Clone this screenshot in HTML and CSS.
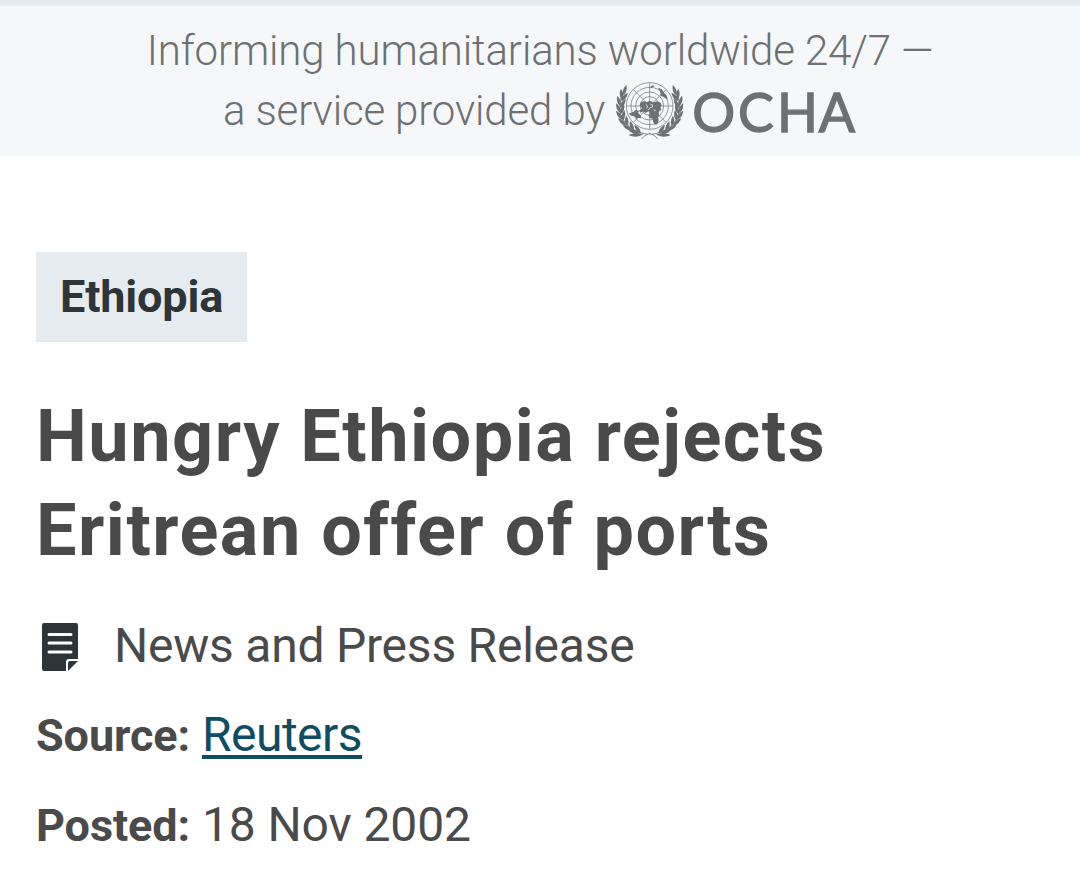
FILE: index.html
```
<!DOCTYPE html>
<html lang="en">
<head>
    <meta charset="UTF-8">
    <meta name="viewport" content="width=device-width, initial-scale=1.0">
    <title>Hungry Ethiopia rejects Eritrean offer of ports</title>
    <link rel="stylesheet" href="styles.css">
</head>
<body>
    <header class="banner">
        <div class="banner-line">Informing humanitarians worldwide 24/7 —</div>
        <div class="banner-line">
            <span>a service provided by</span>
            <svg class="ocha" viewBox="30 15 724 216" role="img" aria-label="OCHA">
                <defs>
                    <path id="leaf" d="M0 2C-7 -4 -9 -17 -2 -30C5 -19 6 -7 0 2Z"/>
                    <g id="branch">
                        <path class="line" d="M124 193C80 186 46 158 42 120C40 93 46 70 60 54"/>
                        <use href="#leaf" transform="translate(53 74) rotate(20)"/>
                        <use href="#leaf" transform="translate(48 86) rotate(-2)"/>
                        <use href="#leaf" transform="translate(47 92) rotate(42)"/>
                        <use href="#leaf" transform="translate(43 106) rotate(-14)"/>
                        <use href="#leaf" transform="translate(44 112) rotate(34)"/>
                        <use href="#leaf" transform="translate(43 127) rotate(-20)"/>
                        <use href="#leaf" transform="translate(45 131) rotate(22)"/>
                        <use href="#leaf" transform="translate(48 147) rotate(-32)"/>
                        <use href="#leaf" transform="translate(51 150) rotate(12)"/>
                        <use href="#leaf" transform="translate(59 165) rotate(-44)"/>
                        <use href="#leaf" transform="translate(64 167) rotate(-2)"/>
                        <use href="#leaf" transform="translate(76 179) rotate(-56)"/>
                        <use href="#leaf" transform="translate(82 181) rotate(-16)"/>
                        <use href="#leaf" transform="translate(97 189) rotate(-70)"/>
                        <use href="#leaf" transform="translate(103 189) rotate(-32)"/>
                        <path d="M68 195C82 187 102 189 112 193C98 202 82 202 68 195Z"/>
                        <path class="line" d="M107 207C115 196 126 191 134 191"/>
                    </g>
                </defs>
                <g class="globe">
                    <circle cx="131" cy="108" r="70"/>
                    <circle cx="131" cy="108" r="56"/>
                    <circle cx="131" cy="108" r="42"/>
                    <circle cx="131" cy="108" r="28"/>
                    <circle cx="131" cy="108" r="13"/>
                    <path d="M131 38V178M61 108H201M82 59L121 98M141 118L180 157M180 59L141 98M121 118L82 157"/>
                </g>
                <g class="land">
                    <path d="M103 98L112 94L125 97L131 93L143 97L154 94L164 98L167 106L163 112L166 119L158 126L160 134L156 141L158 151L154 163L147 164L141 155L140 146L132 144L127 136L133 130L127 124L119 129L110 124L104 128L99 122L108 115L101 106Z"/>
                    <path d="M69 130L82 126L89 120L99 122L96 130L104 136L105 145L96 143L91 146L86 139L75 137Z"/>
                    <path d="M156 53L167 58L174 68L182 76L185 89L174 82L164 77L163 67Z"/>
                    <path d="M133 51L139 46L148 49L141 50L137 55Z"/>
                    <path class="gap" d="M119 103L125 108L122 115M133 102L140 105L139 111L132 113L127 120M143 119L149 122"/>
                </g>
                <use href="#branch"/>
                <use href="#branch" transform="translate(262 0) scale(-1 1)"/>
                <text class="ocha-name" x="259 396 513 638" y="185">OCHA</text>
            </svg>
        </div>
    </header>
    <main class="article">
        <a class="country">Ethiopia</a>
        <h1 class="title">Hungry Ethiopia rejects<br>Eritrean offer of ports</h1>
        <p class="format">
            <svg class="format-icon" viewBox="0 0 36 48" aria-hidden="true">
                <path d="M2 0H34Q36 0 36 2V36H27Q24 36 24 39V48H2Q0 48 0 46V2Q0 0 2 0Z"/>
                <path d="M26 48V40Q26 38 28 38H36Z"/>
                <path class="rule" d="M7 11.5H29M7 20H29M7 29H29"/>
            </svg>
            <span>News and Press Release</span>
        </p>
        <p class="meta"><b>Source:</b> <a class="source" href="#">Reuters</a></p>
        <p class="meta"><b>Posted:</b> <span>18 Nov 2002</span></p>
    </main>
</body>
</html>
```
FILE: styles.css
```
*{
    box-sizing: border-box;
}
body{
    margin: 0;
    font-family: Roboto, sans-serif;
    font-size: 48px;
    color: #4a4a4a;
    background-color: #fff;
    overflow: hidden;
}
.banner{
    height: 156px;
    padding-top: 15px;
    border-top: 6px solid #e6ebef;
    background-color: #f5f7f9;
    color: #6e7071;
    font-size: 42px;
    font-weight: 300;
    letter-spacing: -.14px;
}
.banner-line{
    display: flex;
    justify-content: center;
    height: 60px;
    line-height: 60px;
    white-space: nowrap;
}
.ocha{
    width: 241.33px;
    height: 72px;
    margin: -6px 0 0 10.5px;
    fill: #6e7071;
}
.ocha .line{
    fill: none;
    stroke: #6e7071;
    stroke-width: 2.5;
}
.globe{
    fill: none;
    stroke: #7a7c7d;
    stroke-width: 2.3;
}
.land .gap{
    fill: none;
    stroke: #d4d6d8;
    stroke-width: 3;
}
.ocha-name{
    font-family: Lato, sans-serif;
    font-size: 161px;
    font-weight: 400;
    letter-spacing: 0;
    stroke: #6e7071;
    stroke-width: 4;
}
.article{
    padding: 96px 36px 0;
}
.country{
    display: block;
    width: 211px;
    height: 90px;
    padding-left: 24px;
    line-height: 90px;
    font-size: 45px;
    font-weight: 700;
    letter-spacing: -.15px;
    color: #2e3539;
    background-color: #e6ebef;
}
.title{
    margin: 48px 0 0;
    font-size: 72px;
    line-height: 94px;
    font-weight: 700;
    letter-spacing: 1.5px;
    white-space: nowrap;
}
.format{
    display: flex;
    align-items: center;
    gap: 36px;
    height: 72px;
    margin: 31px 0 0 6px;
    letter-spacing: -.23px;
}
.format-icon{
    width: 36px;
    height: 48px;
    margin-top: 4px;
    fill: #2e3539;
}
.format-icon .rule{
    fill: none;
    stroke: #fff;
    stroke-width: 3;
    stroke-linecap: round;
}
.meta{
    height: 72px;
    margin: 18px 0 0;
    line-height: 72px;
    letter-spacing: -.1px;
}
.meta b{
    font-size: 45px;
}
.source{
    color: #0f4d63;
    letter-spacing: -.5px;
    text-decoration-thickness: 4px;
    text-underline-offset: 4px;
}
```
